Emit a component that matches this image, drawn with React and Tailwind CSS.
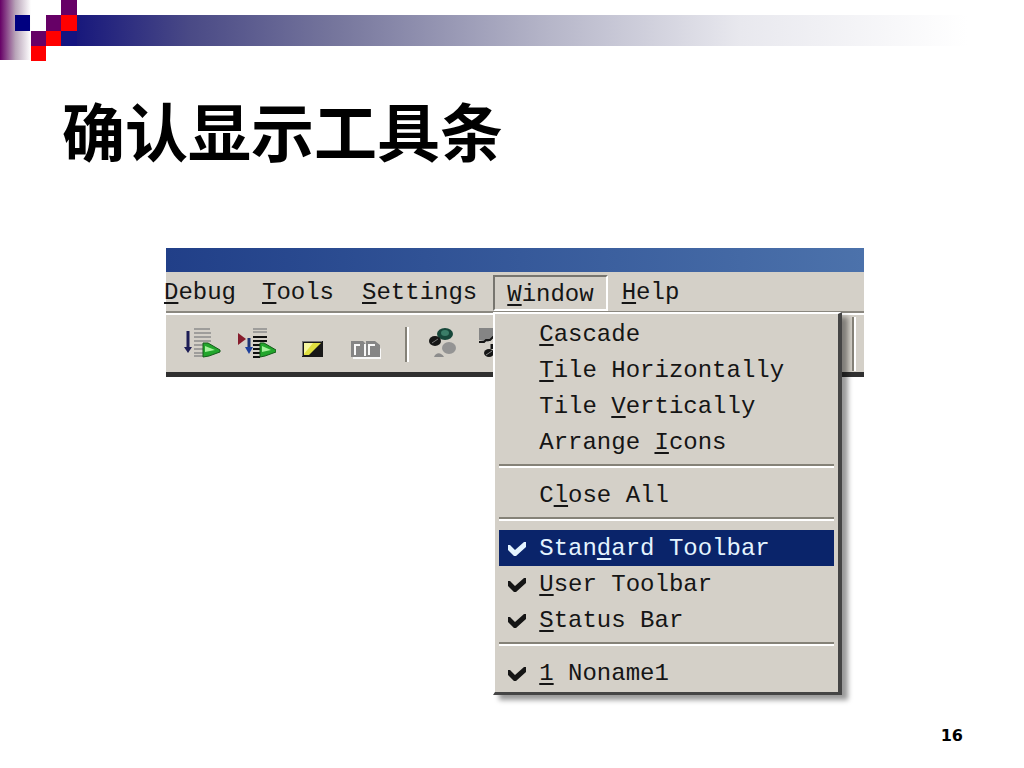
import React from "react";

const menuItems = [
  { before: "", key: "C", after: "ascade" },
  { before: "", key: "T", after: "ile Horizontally" },
  { before: "Tile ", key: "V", after: "ertically" },
  { before: "Arrange ", key: "I", after: "cons" },
  { separator: true },
  { before: "C", key: "l", after: "ose All" },
  { separator: true },
  { before: "Stan", key: "d", after: "ard Toolbar", checked: true, active: true },
  { before: "", key: "U", after: "ser Toolbar", checked: true },
  { before: "", key: "S", after: "tatus Bar", checked: true },
  { separator: true },
  { before: "", key: "1", after: " Noname1", checked: true },
];

function Label(props) {
  return (
    <span className="whitespace-pre">
      {props.before}
      <span className="underline decoration-2 underline-offset-3">{props.letter}</span>
      {props.after}
    </span>
  );
}

function Check() {
  return (
    <svg width="20" height="16" viewBox="0 0 20 16" fill="currentColor" aria-hidden="true">
      <path d="M1 4h2l5 5L17 1h2v5L9 15H7L1 9z" />
    </svg>
  );
}

function SlideHeader() {
  return (
    <header className="flex">
      <svg width="77" height="61" viewBox="0 0 77 61" className="shrink-0" aria-hidden="true">
        <defs>
          <linearGradient id="edge">
            <stop offset="0" stopColor="#660066" />
            <stop offset="0.5" stopColor="#b9a5b9" />
            <stop offset="1" stopColor="#ffffff" />
          </linearGradient>
        </defs>
        <rect width="31" height="60" fill="url(#edge)" />
        <rect x="61" y="15" width="16" height="31" fill="#141480" />
        <path fill="#000080" d="M15 15h15v16H15z" />
        <path fill="#660066" d="M61 0h16v15H61zM46 15h15v16H46zM31 31h15v15H31z" />
        <path fill="#ff0000" d="M61 15h16v16H61zM46 31h15v15H46zM31 46h15v15H31z" />
      </svg>
      <div className="mt-[15px] h-[31px] flex-1 bg-[linear-gradient(to_right,#18187c,#4a4a86_12%,#75759c_27%,#b6b6c9_50%,#e8e8ee_70%,#ffffff_94%)]" />
    </header>
  );
}

function StepIcon() {
  return (
    <svg width="38" height="32" viewBox="0 0 38 32" aria-hidden="true">
      <path d="M4 4v17" stroke="#1d1d55" strokeWidth="3" />
      <path d="M0 20h8l-4 6z" fill="#1d1d55" />
      <path d="M10 2h16M10 6h17M10 10h17M10 14h17M10 18h9M10 22h9M10 26h9M10 29h9" stroke="#8c8c8c" strokeWidth="1.5" />
      <path d="M19 16h5l12 7v2l-11 4-6 1z" fill="#22a62c" stroke="#145c1a" />
      <path d="M21 19l10 4-10 2z" fill="#a5f29c" />
    </svg>
  );
}

function StepBreakIcon() {
  return (
    <svg width="38" height="32" viewBox="0 0 38 32" aria-hidden="true">
      <path d="M0 6l8 6-8 6z" fill="#861c2c" />
      <path d="M11 11v10" stroke="#1d3474" strokeWidth="3" />
      <path d="M7 20h8l-4 7z" fill="#1d3f9c" />
      <path d="M15 2h14M15 5h14" stroke="#8c8c8c" strokeWidth="1.5" />
      <path d="M15 10h14M15 14h14M15 18h7M15 22h7M15 26h7M15 30h7" stroke="#101010" strokeWidth="2" />
      <path d="M22 16h4l12 7v2l-11 4-5 1z" fill="#22a62c" stroke="#145c1a" />
      <path d="M24 19l9 4-9 2z" fill="#a5f29c" />
    </svg>
  );
}

function StopIcon() {
  return (
    <svg width="21" height="16" viewBox="0 0 21 16" aria-hidden="true">
      <path d="M0 0h21v16H0z" fill="#181818" />
      <path d="M2 2h17L7 14H2z" fill="#e0e040" />
      <path d="M2 13V2h9z" fill="#f6f6a0" />
      <path d="M0 0h20v1H1v14H0z" fill="#777777" />
    </svg>
  );
}

function PagesIcon() {
  return (
    <svg width="32" height="18" viewBox="0 0 32 18" aria-hidden="true">
      <path d="M2 2h12l2 2h10l4 4v10H2z" fill="#f8f8f8" />
      <path d="M0 0h12l3 3V0h9l5 4v12H0z" fill="#858585" />
      <path d="M4 14V4h5M18 14V4h6M14 3v12" stroke="#f8f8f8" strokeWidth="2" fill="none" />
    </svg>
  );
}

function FeetIcon() {
  return (
    <svg width="29" height="32" viewBox="0 0 29 32" aria-hidden="true">
      <ellipse cx="16" cy="7" rx="8" ry="6" fill="#17473a" />
      <ellipse cx="16" cy="6" rx="4" ry="3" fill="#3b7d68" />
      <ellipse cx="6" cy="14" rx="6" ry="5" fill="#161616" />
      <path d="M3 16l6-4" stroke="#777777" />
      <ellipse cx="20" cy="21" rx="7" ry="6" fill="#949494" />
      <path d="M5 30c2-5 7-5 10 0z" fill="#8c8c8c" />
    </svg>
  );
}

function TraceIcon() {
  return (
    <svg width="28" height="32" viewBox="0 0 28 32" aria-hidden="true">
      <path d="M0 1h28v9l-14 1-5 4-9-2z" fill="#858585" />
      <path d="M0 15h5l2-2h4l3-3h3" stroke="#161616" strokeWidth="2" fill="none" />
      <path d="M13 17v5" stroke="#161616" strokeWidth="3" />
      <ellipse cx="10" cy="26" rx="5" ry="4" fill="#161616" />
      <path d="M7 28l6-4" stroke="#888888" />
    </svg>
  );
}

function WindowMenu() {
  return (
    <div
      role="menu"
      className="absolute left-0 top-[37px] z-10 w-[349px] border-2 border-r-4 border-b-3 border-t-white border-l-white border-r-[#454545] border-b-[#454545] bg-[#d4d0c8] px-1 pt-0.5 pb-px shadow-[6px_5px_5px_rgba(0,0,0,0.4)]"
    >
      {menuItems.map((item, i) =>
        item.separator ? (
          <div key={i} role="separator" className="h-[17px] pt-1">
            <div className="h-1 border-t-2 border-b-2 border-t-[#858278] border-b-white" />
          </div>
        ) : (
          <button
            key={i}
            role={item.checked ? "menuitemcheckbox" : "menuitem"}
            aria-checked={item.checked}
            className={`flex h-9 w-full items-center gap-3 px-2 pt-0.5 ${item.active ? "bg-[#0a246a] text-[#e4f4ff]" : ""}`}
          >
            <span className="w-5">{item.checked && <Check />}</span>
            <Label before={item.before} letter={item.key} after={item.after} />
          </button>
        )
      )}
    </div>
  );
}

function DebuggerWindow() {
  return (
    <section className="mr-40 ml-[166px] bg-[#d4d0c8] font-['Liberation_Mono',monospace] text-2xl leading-9 text-[#151515]">
      <div className="h-6 bg-linear-to-r from-[#213f88] to-[#4c72ab]" />

      {/* Menu bar */}
      <nav className="flex h-[41px] items-start border-b-2 border-[#8b8880] pt-[3px]">
        <button className="flex w-[82px] justify-end pr-3">
          <Label before="" letter="D" after="ebug" />
        </button>
        <button className="px-3.5">
          <Label before="" letter="T" after="ools" />
        </button>
        <button className="px-3.5">
          <Label before="" letter="S" after="ettings" />
        </button>
        <div className="relative ml-0.5">
          <button
            aria-haspopup="menu"
            aria-expanded="true"
            className="h-9 border-2 border-t-[#77756f] border-l-[#77756f] border-r-white border-b-white px-3"
          >
            <Label before="" letter="W" after="indow" />
          </button>
          <WindowMenu />
        </div>
        <button className="px-3.5">
          <Label before="" letter="H" after="elp" />
        </button>
      </nav>

      {/* Toolbar */}
      <div className="flex h-16 items-start border-t-2 border-b-5 border-t-white border-b-[#303030] pt-3 pl-[18px]">
        <button aria-label="Step"><StepIcon /></button>
        <button aria-label="Step to breakpoint" className="ml-4"><StepBreakIcon /></button>
        <button aria-label="Stop" className="mt-3.5 ml-[26px]"><StopIcon /></button>
        <button aria-label="Pages" className="mt-3.5 ml-7"><PagesIcon /></button>
        <div className="ml-[22px] h-[35px] w-1 border-r-2 border-l-2 border-r-white border-l-[#858278]" />
        <button aria-label="Trace into" className="ml-5"><FeetIcon /></button>
        <button aria-label="Trace over" className="ml-[21px]"><TraceIcon /></button>
        <div className="-mt-2.5 mr-2 ml-auto h-[54px] w-1 border-r-2 border-l-2 border-r-white border-l-[#858278]" />
      </div>
    </section>
  );
}

function App() {
  return (
    <div className="flex min-h-screen flex-col bg-white text-black">
      <SlideHeader />
      <main className="flex-1">
        <h1 className="mt-5 mb-[71px] ml-[62px] font-['Noto_Sans_CJK_SC',sans-serif] text-[63px] leading-24 font-bold">
          确认显示工具条
        </h1>
        <DebuggerWindow />
      </main>
      <footer className="pr-[61px] pb-5 text-right font-['DejaVu_Sans',sans-serif] text-base leading-6 font-bold">
        16
      </footer>
    </div>
  );
}

export default App;
